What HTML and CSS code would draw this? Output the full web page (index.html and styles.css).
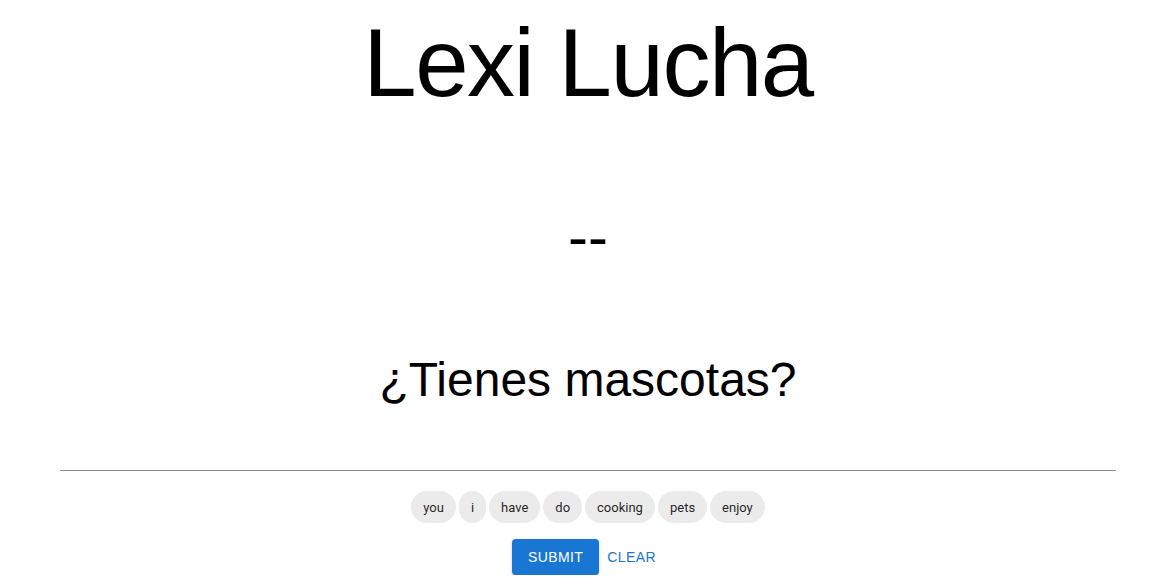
FILE: index.html
```html
<!DOCTYPE html>
<html>
<head>
<meta charset="utf-8">
<link rel="stylesheet" href="styles.css">
</head>
<body>
<div class="page">
  <h1 class="title">Lexi Lucha</h1>
  <div class="answer">--</div>
  <div class="question">¿Tienes mascotas?</div>
  <div class="divider"></div>
  <div class="chips">
    <span class="chip">you</span>
    <span class="chip">i</span>
    <span class="chip">have</span>
    <span class="chip">do</span>
    <span class="chip">cooking</span>
    <span class="chip">pets</span>
    <span class="chip">enjoy</span>
  </div>
  <div class="actions">
    <button class="btn btn-contained">Submit</button>
    <button class="btn btn-text">Clear</button>
  </div>
</div>
</body>
</html>
```
FILE: styles.css
```css
html, body {
  margin: 0;
  padding: 0;
  background: #fff;
}
body {
  font-family: "Liberation Sans", Arial, sans-serif;
  color: #000;
}
.page {
  padding: 8px 39px 0 60px;
  display: flex;
  flex-direction: column;
  align-items: stretch;
  text-align: center;
}
.title {
  margin: 0;
  font-size: 96px;
  font-weight: 400;
  letter-spacing: -1.5px;
  line-height: normal;
}
.answer {
  margin-top: 84px;
  font-size: 60px;
  line-height: normal;
}
.question {
  margin-top: 81px;
  font-size: 48px;
  line-height: normal;
}
.divider {
  margin-top: 63px;
  height: 1px;
  background: #8a8a8a;
}
.chips {
  margin-top: 20px;
  display: flex;
  justify-content: center;
  gap: 3px;
}
.chip {
  height: 32px;
  display: inline-flex;
  align-items: center;
  padding: 0 12px;
  border-radius: 16px;
  background: #ebebeb;
  color: rgba(0,0,0,0.87);
  font-family: Roboto, "Liberation Sans", sans-serif;
  font-size: 13px;
}
.actions {
  margin-top: 16px;
  display: flex;
  justify-content: center;
}
.btn {
  font-family: "Liberation Sans", Arial, sans-serif;
  font-size: 14px;
  font-weight: 400;
  letter-spacing: 0.4px;
  text-transform: uppercase;
  border: 0;
  border-radius: 4px;
  height: 36px;
  cursor: pointer;
}
.btn-contained {
  background: #1976d2;
  color: #fff;
  padding: 0 16px;
  box-shadow: 0 3px 1px -2px rgba(0,0,0,0.2), 0 2px 2px 0 rgba(0,0,0,0.14), 0 1px 5px 0 rgba(0,0,0,0.12);
}
.btn-text {
  background: transparent;
  color: #1976d2;
  padding: 0 8px;
}
```
